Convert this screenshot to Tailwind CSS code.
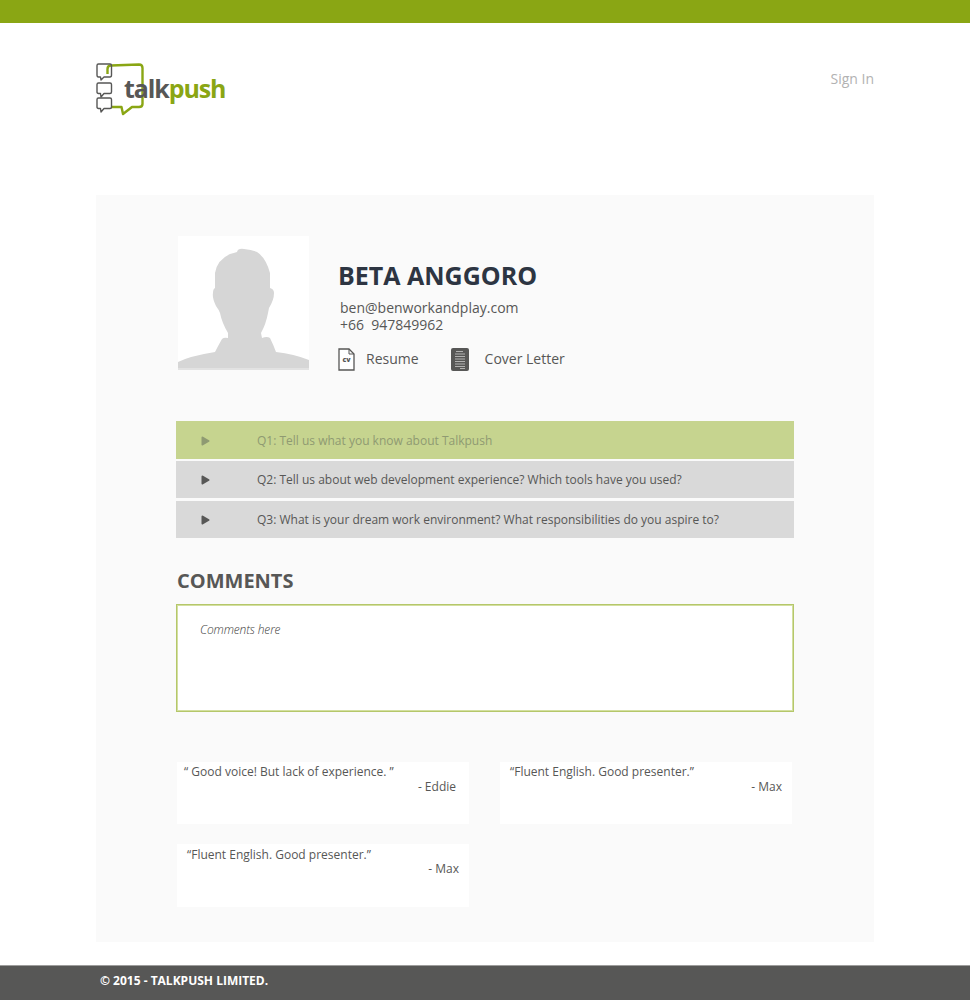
<!DOCTYPE html>
<html lang="en">
<head>
    <meta charset="UTF-8">
    <meta name="viewport" content="width=device-width, initial-scale=1.0">
    <title>Talkpush</title>
    <script src="https://cdn.jsdelivr.net/npm/@tailwindcss/browser@4"></script>
</head>
<body class="bg-white font-['Open_Sans',sans-serif] text-[#575756] h-[1000px] overflow-hidden flex flex-col">
    <div class="h-[23px] bg-[#8aa614]"></div>

    <!-- header -->
    <header class="h-[172px] pl-[96px] pr-[96px] flex justify-between items-start">
        <div class="mt-[39px] relative w-[132px] h-[54px]">
            <svg class="absolute left-0 top-0" width="132" height="54" viewBox="0 0 132 54" fill="none">
                <path d="M11.500 12 V7 Q11.500 3.500 15 3.500 L43 2.500 Q46.500 2.500 46.500 6 V42 Q46.500 45 43 45 H36 L27 52 L25.500 45 H15" stroke="#8aa614" stroke-width="2.400" stroke-linejoin="round"/>
                <g stroke="#575756" stroke-width="1.400" stroke-linejoin="round">
                    <path d="M2.500 2 H14 Q15.500 2 15.500 3.500 V13 Q15.500 15 14 15 H8 L5 18 L4.500 15 H2.500 Q1 15 1 13 V3.500 Q1 2 2.500 2Z"/>
                    <path d="M2.500 21 H14 Q15.500 21 15.500 22.500 V30 Q15.500 31.500 14 31.500 H8 L5 35 L4.500 31.500 H2.500 Q1 31.500 1 30 V22.500 Q1 21 2.500 21Z"/>
                    <path d="M2.500 36 H14 Q15.500 36 15.500 37.500 V45 Q15.500 46.500 14 46.500 H8 L5 50 L4.500 46.500 H2.500 Q1 46.500 1 45 V37.500 Q1 36 2.500 36Z"/>
                </g>
            </svg>
            <span class="absolute left-[28px] top-[6px] text-[25px] leading-[40px] font-bold tracking-[-1.100px] whitespace-nowrap"><span class="text-[#575756]">talk</span><span class="text-[#8aa614]">push</span></span>
        </div>
        <a class="mt-[45px] text-[14px] leading-[22px] text-[#b2b2b2]">Sign In</a>
    </header>

    <!-- panel -->
    <main class="mx-[96px] h-[747px] bg-[#fafafa] pl-[80px] pr-[80px] pt-[41px]">
        <section class="flex h-[134px]">
            <div class="ml-[2px] w-[131px] h-[134px] bg-white">
                <svg width="131" height="134" viewBox="0 0 131 134">
                    <path d="M0 134 V126 Q12 120 37 116 Q40 110 44 103 Q46 101 50 102 L50 97 Q44 87 42 77 Q41 74 38 70 Q34 62 35 57 Q35 53 37 52 L37 37 Q39 24 52 18 Q56 17 59 16 Q60 12 66 13 Q74 14 79 16 Q88 22 92 37 L92 52 Q96 53 96 57 Q96 64 91 72 L90 77 Q88 88 83 97 L84 102 Q89 100 92 102 Q95 108 98 116 Q116 118 131 124 V134Z" fill="#d6d6d6"/>
                    <rect y="132" width="131" height="2" fill="#e2e2e2"/>
                </svg>
            </div>
            <div class="ml-[29px] pt-[22px]">
                <h1 class="text-[25px] leading-[34px] font-bold text-[#2d3542]">BETA ANGGORO</h1>
                <div class="ml-[2px] mt-[7px] text-[14px] leading-[17px]">
                    <p>ben@benworkandplay.com</p>
                    <p class="whitespace-pre">+66  947849962</p>
                </div>
                <div class="flex items-center mt-[14px] text-[14px] leading-[24px]">
                    <svg width="17" height="23" viewBox="0 0 17 23" fill="none">
                        <path d="M1 1 H11 L16 6 V22 H1Z" fill="#fff" stroke="#575756" stroke-width="1.300"/>
                        <path d="M11 1 V6 H16" stroke="#575756"/>
                        <text x="8.500" y="14" text-anchor="middle" font-size="7" font-weight="800" fill="#575756">cv</text>
                    </svg>
                    <span class="ml-[11px]">Resume</span>
                    <svg class="ml-[32px]" width="18" height="23" viewBox="0 0 18 23">
                        <rect width="18" height="23" rx="2" fill="#575756"/>
                        <path d="M5 3.500 H12 M4 6 H14 M4 8.500 H14 M4 11 H14 M4 13.500 H14 M4 16 H14 M4 18.500 H14 M9 20.500 H14" stroke="#c8c8c8" stroke-width="0.800"/>
                    </svg>
                    <span class="ml-[16px]">Cover Letter</span>
                </div>
            </div>
        </section>

        <!-- questions -->
        <section class="mt-[51px] w-[618px] text-[12px]">
            <div class="h-[38px] pt-[1px] bg-[#c6d48f] flex items-center pl-[25px] text-[#8f9a72]">
                <svg width="9" height="10" viewBox="0 0 9 10"><path d="M1.500 1.500 L7.500 5 L1.500 8.500Z" fill="#8f9a72" stroke="#8f9a72" stroke-width="2" stroke-linejoin="round"/></svg>
                <span class="ml-[47px]">Q1: Tell us what you know about Talkpush</span>
            </div>
            <div class="mt-[2px] h-[37px] bg-[#d9d9d9] flex items-center pl-[25px]">
                <svg width="9" height="10" viewBox="0 0 9 10"><path d="M1.500 1.500 L7.500 5 L1.500 8.500Z" fill="#575756" stroke="#575756" stroke-width="2" stroke-linejoin="round"/></svg>
                <span class="ml-[47px]">Q2: Tell us about web development experience? Which tools have you used?</span>
            </div>
            <div class="mt-[3px] h-[37px] bg-[#d9d9d9] flex items-center pl-[25px]">
                <svg width="9" height="10" viewBox="0 0 9 10"><path d="M1.500 1.500 L7.500 5 L1.500 8.500Z" fill="#575756" stroke="#575756" stroke-width="2" stroke-linejoin="round"/></svg>
                <span class="ml-[47px]">Q3: What is your dream work environment? What responsibilities do you aspire to?</span>
            </div>
        </section>

        <!-- comments -->
        <h2 class="mt-[29px] ml-[1px] text-[20px] leading-[28px] font-bold">COMMENTS</h2>
        <div class="mt-[9px] w-[618px] h-[108px] bg-white border border-[#b5c76a] shadow-[inset_0_0_0_1px_#d3dfa0] pl-[23px] pt-[16px] text-[12px] leading-[18px] tracking-[-0.150px] italic font-light text-[#3c3c3b]">Comments here</div>

        <section class="mt-[50px] ml-[1px] w-[615px] grid grid-cols-[292px_292px] gap-x-[31px] gap-y-[20px] text-[12px] leading-[15px]">
            <div class="h-[62px] bg-white pl-[7px] pr-[13px] pt-[2px]">
                <p>“ Good voice! But lack of experience. ”</p>
                <p class="text-right">- Eddie</p>
            </div>
            <div class="h-[62px] bg-white pl-[10px] pr-[10px] pt-[2px]">
                <p>“Fluent English. Good presenter.”</p>
                <p class="text-right">- Max</p>
            </div>
            <div class="h-[63px] bg-white pl-[10px] pr-[10px] pt-[4px] leading-[14px]">
                <p>“Fluent English. Good presenter.”</p>
                <p class="text-right">- Max</p>
            </div>
        </section>
    </main>

    <footer class="mt-[23px] h-[35px] bg-[#575756] border-t border-[#9d9d9c] pl-[100px] pt-[6px] text-[12px] leading-[18px] font-bold text-white">© 2015 - TALKPUSH LIMITED.</footer>
</body>
</html>
